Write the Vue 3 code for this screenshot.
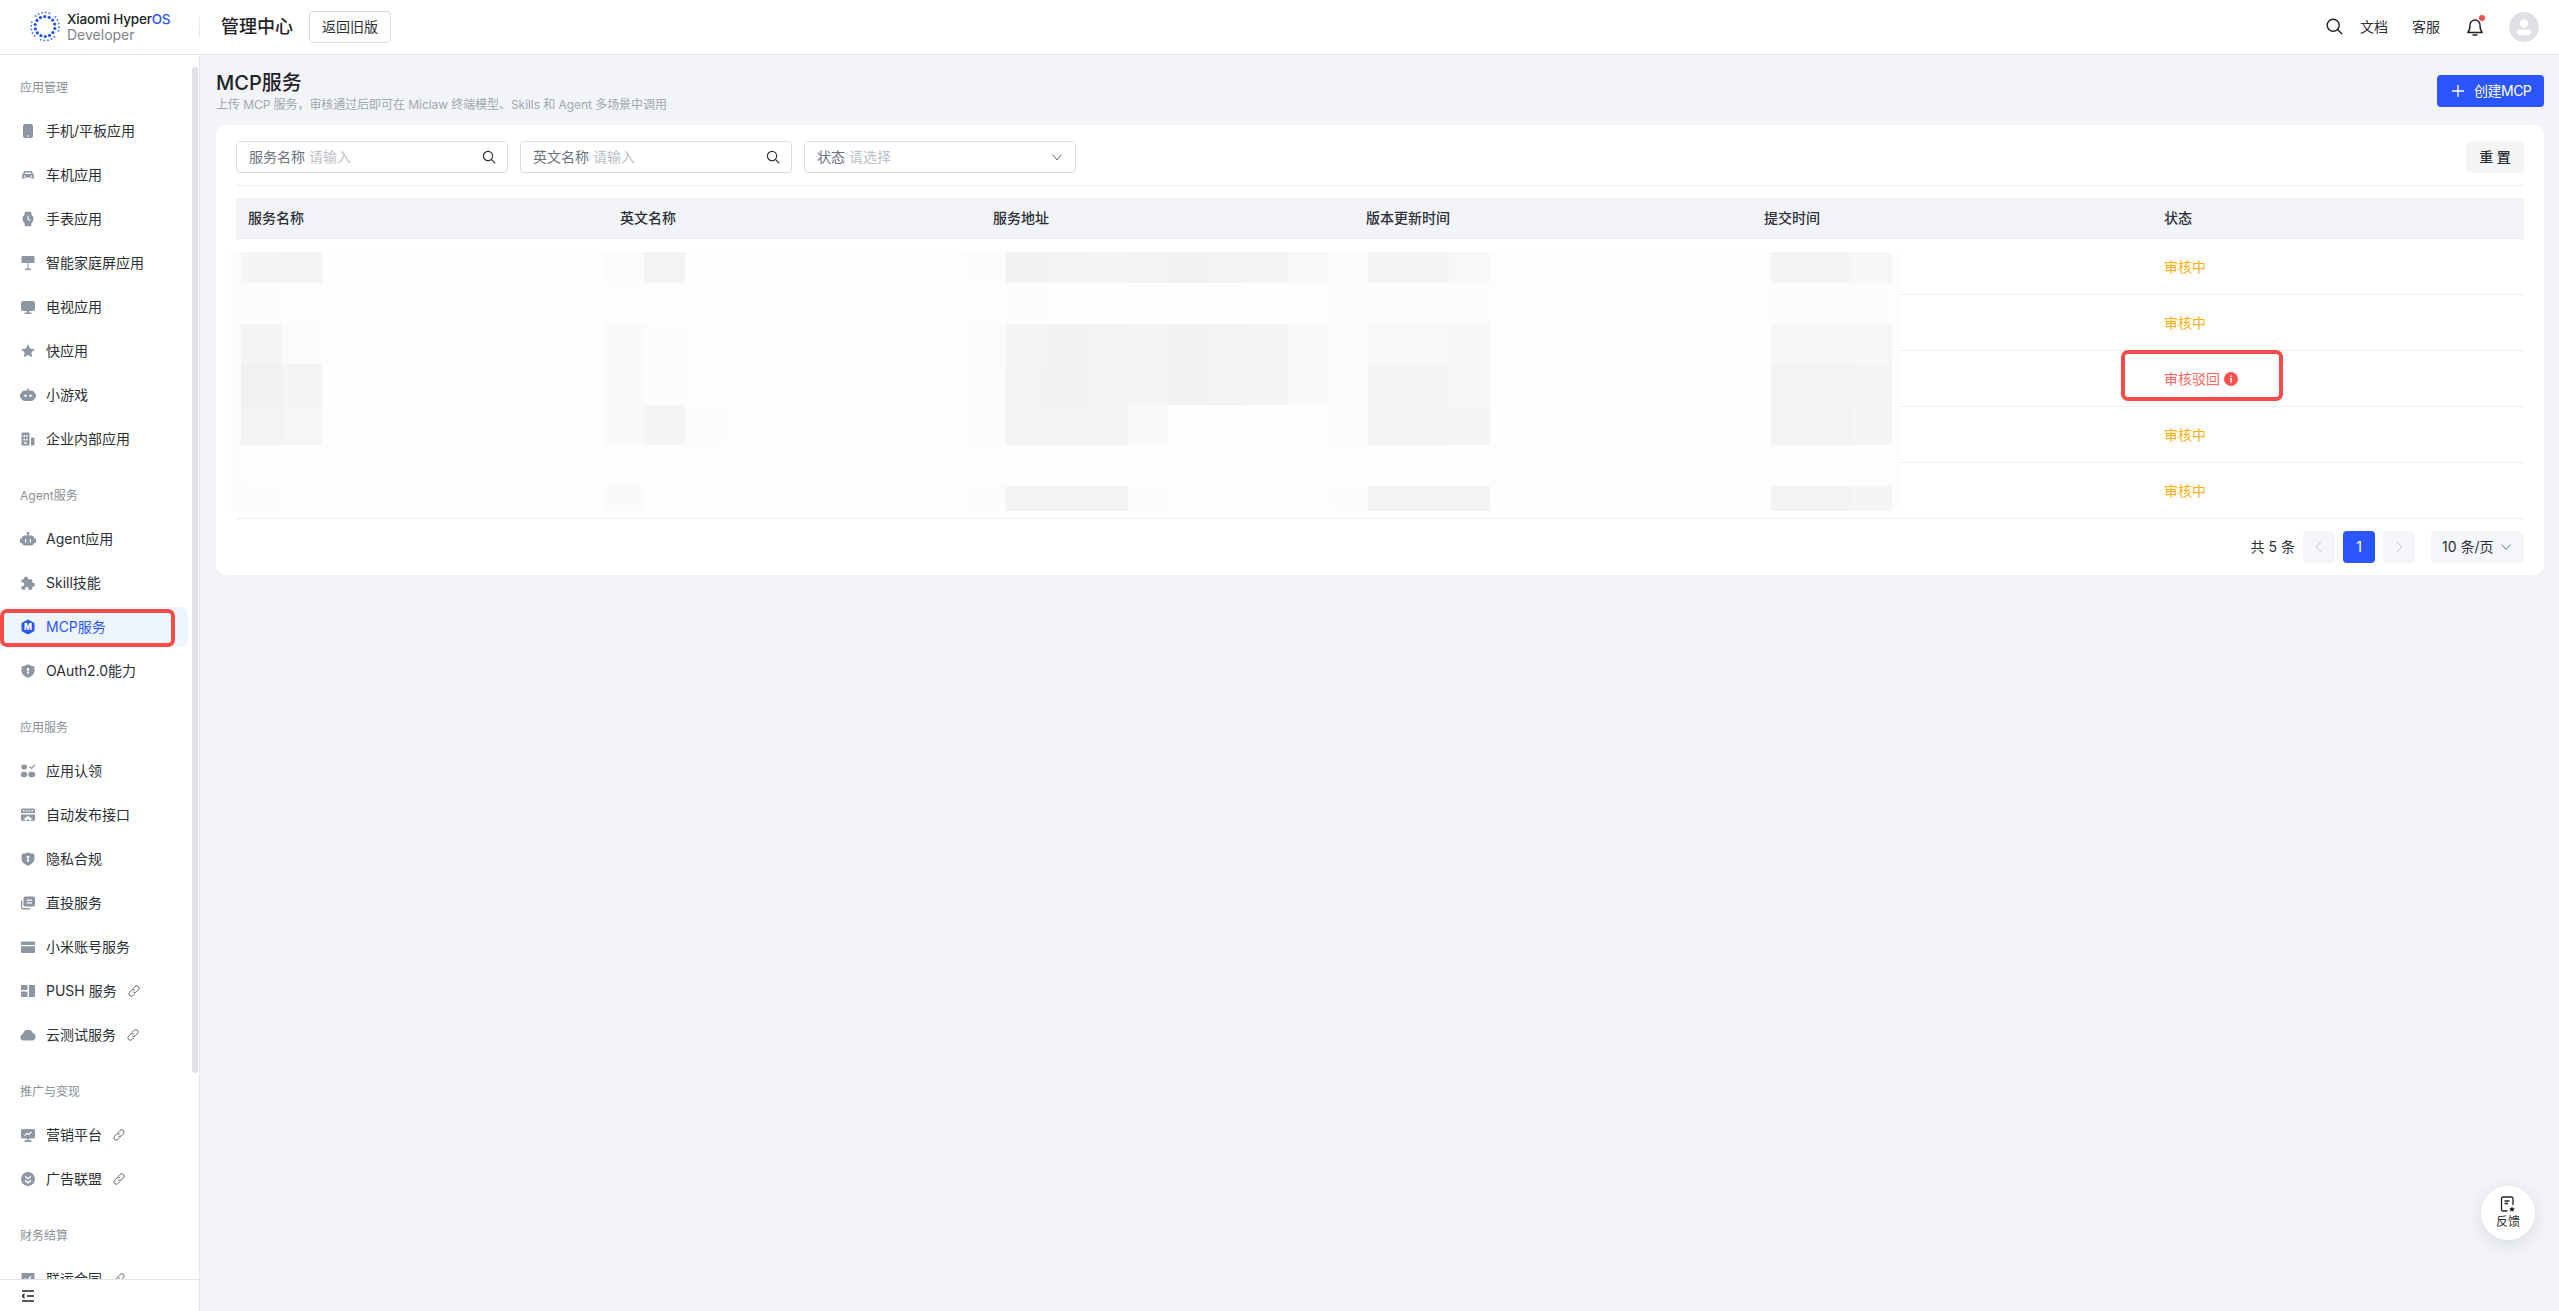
<script setup>
const icons = {
  phone: 'M5 1h6a2 2 0 0 1 2 2v10a2 2 0 0 1-2 2H5a2 2 0 0 1-2-2V3a2 2 0 0 1 2-2zM7 12.600v.8h2v-.8z',
  car: 'M5 4h6c.6 0 1 .3 1.200.8l.8 2.200c.6.3 1 .8 1 1.500v3h-2.500v-1h-7v1H2V8.500c0-.7.4-1.200 1-1.500l.8-2.200C4 4.300 4.400 4 5 4zM5.200 5.500l-.6 1.500h6.800l-.6-1.500zM3.800 8.400v1.300h1.700V8.400zM10.500 8.400v1.300h1.700V8.400z',
  watch: 'M5 .8h6l.5 3A5 5 0 0 1 13.500 8a5 5 0 0 1-2 4.200l-.5 3H5l-.5-3A5 5 0 0 1 2.500 8a5 5 0 0 1 2-4.200zM7.400 4.800v3.700l2.500 1.500.6-1-1.900-1.100V4.800z',
  home: 'M2.500 1h11a1 1 0 0 1 1 1v5a1 1 0 0 1-1 1h-5v5.500H11V15H5v-1.500h2.500V8h-5a1 1 0 0 1-1-1V2a1 1 0 0 1 1-1z',
  tv: 'M3 2h10a2 2 0 0 1 2 2v6a2 2 0 0 1-2 2H9v1.500h2.500V15h-7v-1.500H7V12H3a2 2 0 0 1-2-2V4a2 2 0 0 1 2-2z',
  star: 'M8 1.200l2.100 4.300 4.700.7-3.400 3.300.8 4.700L8 12l-4.200 2.200.8-4.700L1.200 6.200l4.700-.7z',
  game: 'M7.200 1.500h1.600v2H11a4 4 0 0 1 3.800 3H15a1 1 0 0 1 1 1V10a1 1 0 0 1-1 1h-.2A4 4 0 0 1 11 14H5a4 4 0 0 1-3.800-3H1a1 1 0 0 1-1-1V7.500a1 1 0 0 1 1-1h.2A4 4 0 0 1 5 3.500h2.200zM5.500 7.500a1.200 1.200 0 1 0 0 2.400 1.200 1.200 0 0 0 0-2.400zM10.500 7.500a1.200 1.200 0 1 0 0 2.400 1.200 1.200 0 0 0 0-2.400z',
  corp: 'M2.500 1.500h6a1 1 0 0 1 1 1v11a1 1 0 0 1-1 1h-6a1 1 0 0 1-1-1v-11a1 1 0 0 1 1-1zM3.500 4v2h1.500V4zM6 4v2h1.500V4zM3.500 7.500v2h1.500v-2zM6 7.500v2h1.500v-2zM4.500 11v2h2v-2zM11 6.500h2.500a1 1 0 0 1 1 1v6a1 1 0 0 1-1 1H11z',
  agent: 'M8 .8a1.500 1.500 0 0 1 .7 2.800v1h2.300a3.500 3.500 0 0 1 3.400 3H15a1 1 0 0 1 1 1V11a1 1 0 0 1-1 1h-.7A3.500 3.500 0 0 1 11 14.500H5A3.500 3.500 0 0 1 1.700 12H1a1 1 0 0 1-1-1V8.600a1 1 0 0 1 1-1h.6A3.500 3.500 0 0 1 5 4.600h2.300v-1A1.500 1.500 0 0 1 8 .8zM5 8v3.500h1.200V8zM9.800 8v3.500H11V8z',
  skill: 'M6 1.500a2 2 0 0 1 2 2v.7h3.300a1 1 0 0 1 1 1v2.600h.7a2 2 0 0 1 0 4h-.7v2a1 1 0 0 1-1 1H8.500v-1a1.700 1.700 0 0 0-3.400 0v1H2.500a1 1 0 0 1-1-1v-2.600h1a1.800 1.800 0 0 0 0-3.600h-1V5.200a1 1 0 0 1 1-1H4v-.7a2 2 0 0 1 2-2z',
  shield: 'M8 1.300c2 1.100 3.600 1.700 5.500 2 .6 0 1 .5 1 1v3.200c0 3.400-2.700 6-6.500 7.200-3.800-1.200-6.500-3.800-6.500-7.200V4.300c0-.5.4-1 1-1 1.900-.3 3.500-.9 5.500-2zM6.900 5v2.700h2.200V5zM7.100 8.500v2.300h1.800V8.500z',
  claim: 'M3.800 1.500h.8a2.500 2.500 0 0 1 0 5h-.8a2.500 2.500 0 0 1 0-5zM3.500 8.800h1a2.700 2.700 0 0 1 0 5.400h-1a2.700 2.700 0 0 1 0-5.400zM11 8.800h1.500a2.700 2.700 0 0 1 0 5.400H11a2.700 2.700 0 0 1 0-5.400zM9 4l.9-.9 1.500 1.300 3-2.900.9.9-3.900 3.800z',
  publish: 'M2.500 1.500h11A1.500 1.500 0 0 1 15 3v3H1V3a1.500 1.500 0 0 1 1.500-1.500zM3 3.200v1.200h1.600V3.200zM5.800 3.200v1.200h1.600V3.200zM8.600 3.200v1.200h1.600V3.200zM11.400 3.200v1.200H13V3.200zM1 7.500h14v5A1.500 1.500 0 0 1 13.500 14h-2.700v-1.500H13L8 8.800l-5 3.700h2.200V14H2.500A1.500 1.500 0 0 1 1 12.500zM6.500 12.500h3V14h-3z',
  privacy: 'M8 1.200c1.300.7 3 1.300 5.200 1.500.7 0 1.300.6 1.300 1.300v3.500c0 3.600-2.800 6-6.500 7.300-3.700-1.300-6.500-3.700-6.500-7.300V4c0-.7.6-1.300 1.300-1.300C5 2.500 6.700 1.900 8 1.200zM6.800 5v2.600h2.400V5zM7.100 8.300v2.500h1.800V8.300z',
  direct: 'M5 1.500h8.500a1.500 1.500 0 0 1 1.500 1.500v7a1.500 1.500 0 0 1-1.500 1.500H5A1.500 1.500 0 0 1 3.500 10V3A1.500 1.500 0 0 1 5 1.500zM6.500 4.500v1.200h5.500V4.500zM6.500 7.300v1.200h5.500V7.300zM1 5.500h1.300V12a1 1 0 0 0 1 1H10v1.500H3a2 2 0 0 1-2-2z',
  mi: 'M2 2.500h12a1 1 0 0 1 1 1V6H1V3.500a1 1 0 0 1 1-1zM1 7.200h14V13a1 1 0 0 1-1 1H2a1 1 0 0 1-1-1z',
  push: 'M2 2h4.500a1 1 0 0 1 1 1v3a1 1 0 0 1-1 1H1V3a1 1 0 0 1 1-1zM1 8.500h6.500V14H2a1 1 0 0 1-1-1zM9 2h5a1 1 0 0 1 1 1v10a1 1 0 0 1-1 1H9z',
  cloud: 'M8.500 3a4.500 4.500 0 0 1 4.300 3.300A3.700 3.700 0 0 1 12.500 13.500H3.500A3.300 3.300 0 0 1 3 7 4.500 4.500 0 0 1 8.500 3z',
  market: 'M2.500 2h11a1.500 1.500 0 0 1 1.500 1.500v6.500a1.500 1.500 0 0 1-1.500 1.500H8.800v1.700h2.700V15h-7v-1.800h2.700v-1.700H2.500A1.500 1.500 0 0 1 1 10V3.500A1.500 1.500 0 0 1 2.500 2zM4 8.300l.9.8 2.200-2 1.700 1.200 3.200-3-.8-.8-2.500 2.300-1.700-1.200-2.900 2.600z',
  ads: 'M8 1a7 7 0 1 1 0 14A7 7 0 0 1 8 1zM5 4.500v1.800L8 8.500l3-2.200V4.500L8 6.700zM5 8.500v2L8 12.700l3-2.200v-2L8 10.700z',
  contract: 'M2.500 2h11a1 1 0 0 1 1 1v10a1 1 0 0 1-1 1h-11a1 1 0 0 1-1-1V3a1 1 0 0 1 1-1zM4.500 8l3 2.700 4-4.700-1-.9-3.100 3.500-2-1.700z'
}

const sections = [
  { title: '应用管理', items: [
    { t: '手机/平板应用', i: 'phone' }, { t: '车机应用', i: 'car' }, { t: '手表应用', i: 'watch' },
    { t: '智能家庭屏应用', i: 'home' }, { t: '电视应用', i: 'tv' }, { t: '快应用', i: 'star' },
    { t: '小游戏', i: 'game' }, { t: '企业内部应用', i: 'corp' }
  ] },
  { title: 'Agent服务', items: [
    { t: 'Agent应用', i: 'agent' }, { t: 'Skill技能', i: 'skill' },
    { t: 'MCP服务', i: 'mcp', active: true }, { t: 'OAuth2.0能力', i: 'shield' }
  ] },
  { title: '应用服务', items: [
    { t: '应用认领', i: 'claim' }, { t: '自动发布接口', i: 'publish' }, { t: '隐私合规', i: 'privacy' },
    { t: '直投服务', i: 'direct' }, { t: '小米账号服务', i: 'mi' },
    { t: 'PUSH 服务', i: 'push', link: true }, { t: '云测试服务', i: 'cloud', link: true }
  ] },
  { title: '推广与变现', items: [
    { t: '营销平台', i: 'market', link: true }, { t: '广告联盟', i: 'ads', link: true }
  ] },
  { title: '财务结算', items: [{ t: '联运合同', i: 'contract', link: true }] }
]

const columns = ['服务名称', '英文名称', '服务地址', '版本更新时间', '提交时间', '状态']
const statuses = ['审核中', '审核中', '审核驳回', '审核中', '审核中']

// mosaic that hides the row contents: [y0, y1, [x0, x1, colour]...]
const ox = 231
const oy = 252
const g = (xs, cs) => cs.map((c, n) => [xs[n], xs[n + 1], c]).filter((c) => c[2])
const A = [241, 282, 322]
const C = [604, 644, 685, 725]
const S = [966, 1006, 1047, 1088, 1128, 1168, 1208, 1247, 1288, 1329, 1368, 1409, 1449, 1490]
const T = [1771, 1811, 1851, 1892]
const rowsData = [
  [252, 283, ['#f5f5f5', '#f4f4f4'], ['#fbfbfb', '#f3f3f3'],
    ['#fcfcfc', '#f2f2f2', '#f4f4f4', '#f4f6f5', '#f3f3f3', '#f2f2f2', '#f3f3f3', '#f4f4f4', '#f8f8f8', '#fbfbfb', '#f4f6f5', '#f5f5f5', '#f8f8f8'],
    ['#f4f4f4', '#f4f4f4', '#f7f7f7']],
  [283, 324, ['#fcfcfc', '#fdfdfd'], [],
    ['', '#fcfcfc', '#fefefe', '#fefefe', '#fefefe', '#fefefe', '#fefefe', '#fefefe', '#fefefe', '#fcfcfc', '#fcfcfc', '#fcfcfc', '#fcfcfc'],
    ['#fcfcfc', '#fcfcfc', '#fcfcfc']],
  [324, 364, ['#f4f4f4', '#fbfbfb'], ['#f9f9f9', '#fbfcfb'],
    ['#fbfbfb', '#f4f6f5', '#f2f2f2', '#f3f3f3', '#f4f6f5', '#f2f2f2', '#f3f3f3', '#f4f4f4', '#f8f8f8', '#fbfbfb', '#f8f8f8', '#f8f8f8', '#f7f7f7'],
    ['#f7f7f7', '#f7f7f7', '#f7f7f7']],
  [364, 405, ['#f1f1f1', '#f4f4f4'], ['#f9f9f9', '#fcfcfc'],
    ['#fcfcfc', '#f3f3f3', '#f2f2f2', '#f4f6f5', '#f4f6f5', '#f2f2f2', '#f3f3f3', '#f4f4f4', '#f8f8f8', '#fbfbfb', '#f4f6f5', '#f4f6f5', '#f5f7f6'],
    ['#f3f3f3', '#f3f3f3', '#f4f4f4']],
  [405, 445, ['#f3f3f3', '#f6f6f6'], ['#f9f9f9', '#f5f5f5', '#fcfcfc'],
    ['#fbfbfb', '#f3f3f3', '#f3f3f3', '#f3f3f3', '#f9f9f9', '#fefefe', '#fefefe', '#fefefe', '#fefefe', '#fbfbfb', '#f4f4f4', '#f4f4f4', '#f4f6f5'],
    ['#f3f3f3', '#f3f3f3', '#f4f6f5']],
  [486, 511, ['#fbfbfb'], ['#fafafa'],
    ['#fcfcfc', '#f3f3f3', '#f3f3f3', '#f3f3f3', '#fbfbfb', '', '', '', '', '#fbfcfb', '#f3f3f3', '#f3f3f3', '#f3f3f3'],
    ['#f3f3f3', '#f3f3f3', '#f4f6f5']]
]
const mosaic = []
for (const [y0, y1, a, c, s, t] of rowsData) {
  for (const [x0, x1, col] of [...g(A, a), ...g(C, c), ...g(S, s), ...g(T, t)]) {
    mosaic.push({ left: x0 - ox + 'px', top: y0 - oy + 'px', width: x1 - x0 + 'px', height: y1 - y0 + 'px', background: col })
  }
}

// logo: bright inner ring of large dots, paler outer ring of small dots
const logoDots = []
for (let n = 0; n < 14; n++) {
  const a = (n / 14) * Math.PI * 2 + 0.2
  logoDots.push({ x: 16 + Math.cos(a) * 10, y: 15.500 + Math.sin(a) * 10, r: 1.600, o: 1 })
}
for (let n = 0; n < 24; n++) {
  const a = (n / 24) * Math.PI * 2 + 0.05
  if (n % 6 === 2) continue
  logoDots.push({ x: 16 + Math.cos(a) * 14, y: 15.500 + Math.sin(a) * 14, r: 1, o: .75 })
}
</script>

<template>
  <div class="page">
    <header class="topbar">
      <div class="logo">
        <svg class="logo-mark" width="32" height="31" viewBox="0 0 32 31">
          <circle v-for="(d, n) in logoDots" :key="n" :cx="d.x" :cy="d.y" :r="d.r" :opacity="d.o" fill="#2456f5" />
        </svg>
        <div class="logo-text">
          <div class="logo-line1">Xiaomi Hyper<span class="logo-os">OS</span></div>
          <div class="logo-line2">Developer</div>
        </div>
      </div>
      <span class="top-divider"></span>
      <span class="top-title">管理中心</span>
      <button class="old-btn">返回旧版</button>
      <div class="top-right">
        <svg class="top-search" width="17" height="17" viewBox="0 0 17 17" fill="none" stroke="#1f2329" stroke-width="1.400">
          <circle cx="7.200" cy="7.200" r="6" /><path d="M11.600 11.600l4.200 4.200" stroke-linecap="round" />
        </svg>
        <span class="top-link">文档</span>
        <span class="top-link">客服</span>
        <span class="bell">
          <svg width="18" height="20" viewBox="0 0 18 20" fill="none" stroke="#1f2329" stroke-width="1.400" stroke-linejoin="round">
            <path d="M4 8a5 5 0 0 1 10 0c0 4 .8 6 2.200 7.500H1.800C3.200 14 4 12 4 8z" />
            <path d="M7 18h4" stroke-linecap="round" />
          </svg>
          <i class="bell-dot"></i>
        </span>
        <span class="avatar">
          <svg width="30" height="30" viewBox="0 0 30 30" fill="#fff">
            <circle cx="15" cy="11.500" r="4.200" /><rect x="8" y="17.500" width="14" height="5.500" rx="2.750" />
          </svg>
        </span>
      </div>
    </header>

    <div class="body">
      <aside class="sidebar">
        <nav class="menu">
          <section v-for="s in sections" :key="s.title" class="menu-sec">
            <div class="menu-title">{{ s.title }}</div>
            <a v-for="it in s.items" :key="it.t" class="menu-item" :class="{ active: it.active }">
              <svg v-if="it.i === 'mcp'" class="menu-icon" width="16" height="16" viewBox="0 0 16 16">
                <path d="M8 1l6 3.200v7.600L8 15l-6-3.200V4.200z" fill="#2a55ff" stroke="#2a55ff" stroke-linejoin="round" />
                <text x="8" y="11" text-anchor="middle" font-size="8.500" font-weight="800" fill="#fff" font-family="Inter, sans-serif">M</text>
              </svg>
              <svg v-else class="menu-icon" width="16" height="16" viewBox="0 0 16 16">
                <path :d="icons[it.i]" fill="#8f96a3" fill-rule="evenodd" />
              </svg>
              <span>{{ it.t }}</span>
              <svg v-if="it.link" class="link-icon" width="14" height="14" viewBox="0 0 14 14" fill="none" stroke="#5f6570" stroke-width="1">
                <path d="M6 4.500l2-2a2.300 2.300 0 0 1 3.400 3.300l-2 2a2.300 2.300 0 0 1-3.300 0" />
                <path d="M8 9.500l-2 2a2.300 2.300 0 0 1-3.400-3.300l2-2a2.300 2.300 0 0 1 3.300 0" />
              </svg>
            </a>
          </section>
        </nav>
        <div class="side-foot">
          <svg width="14" height="14" viewBox="0 0 14 14" fill="none" stroke="#1f2329" stroke-width="1.500">
            <path d="M1 2h12M6 7h7M1 12h12" /><path d="M3.500 5L1.500 7l2 2" />
          </svg>
        </div>
        <i class="scroll-thumb"></i>
      </aside>

      <main class="main">
        <div class="head">
          <div>
            <h1 class="h-title">MCP服务</h1>
            <p class="h-sub">上传 MCP 服务，审核通过后即可在 Miclaw 终端模型、Skills 和 Agent 多场景中调用</p>
          </div>
          <button class="create-btn">
            <svg width="14" height="14" viewBox="0 0 14 14" stroke="#fff" stroke-width="1.300"><path d="M7 1v12M1 7h12" /></svg>
            <span>创建MCP</span>
          </button>
        </div>

        <div class="card">
          <div class="filters">
            <div class="field">
              <span class="f-label">服务名称</span><span class="f-ph">请输入</span>
              <svg class="f-icon" width="14" height="14" viewBox="0 0 14 14" fill="none" stroke="#2b2f36" stroke-width="1.200">
                <circle cx="6" cy="6" r="4.600" /><path d="M9.400 9.400l3.400 3.400" stroke-linecap="round" />
              </svg>
            </div>
            <div class="field">
              <span class="f-label">英文名称</span><span class="f-ph">请输入</span>
              <svg class="f-icon" width="14" height="14" viewBox="0 0 14 14" fill="none" stroke="#2b2f36" stroke-width="1.200">
                <circle cx="6" cy="6" r="4.600" /><path d="M9.400 9.400l3.400 3.400" stroke-linecap="round" />
              </svg>
            </div>
            <div class="field">
              <span class="f-label">状态</span><span class="f-ph">请选择</span>
              <svg class="f-icon" width="14" height="14" viewBox="0 0 14 14" fill="none" stroke="#6b7280" stroke-width="1">
                <path d="M2.500 4.500L7 10l4.500-5.500" />
              </svg>
            </div>
            <button class="reset-btn">重 置</button>
          </div>

          <div class="table">
            <div class="t-row t-head">
              <div v-for="c in columns" :key="c" class="t-cell">{{ c }}</div>
            </div>
            <div v-for="(st, n) in statuses" :key="n" class="t-row t-body">
              <div class="t-cell t-status" :class="st === '审核驳回' ? 'rejected' : 'pending'">
                {{ st }}
                <svg v-if="st === '审核驳回'" class="info" width="14" height="14" viewBox="0 0 14 14">
                  <circle cx="7" cy="7" r="7" fill="#f9504d" />
                  <rect x="6.200" y="6" width="1.600" height="4.600" fill="#fff" /><rect x="6.200" y="3.400" width="1.600" height="1.600" fill="#fff" />
                </svg>
              </div>
            </div>
          </div>

          <div class="pager">
            <span class="total">共 5 条</span>
            <button class="p-btn">
              <svg width="12" height="12" viewBox="0 0 12 12" fill="none" stroke="#c3c7cf" stroke-width="1"><path d="M8 1L3 6l5 5" /></svg>
            </button>
            <button class="p-btn on">1</button>
            <button class="p-btn">
              <svg width="12" height="12" viewBox="0 0 12 12" fill="none" stroke="#c3c7cf" stroke-width="1"><path d="M4 1l5 5-5 5" /></svg>
            </button>
            <div class="p-size">
              <span>10 条/页</span>
              <svg width="12" height="12" viewBox="0 0 12 12" fill="none" stroke="#6b7280" stroke-width="1"><path d="M1.500 3.500L6 8.500l4.500-5" /></svg>
            </div>
          </div>
        </div>
      </main>
    </div>

    <!-- censored table contents -->
    <div class="mosaic">
      <i class="mosaic-edge"></i>
      <i v-for="(m, n) in mosaic" :key="n" class="mosaic-cell" :style="m"></i>
    </div>

    <!-- annotations drawn on top of the screenshot -->
    <i class="mark mark-menu"></i>
    <i class="mark mark-status"></i>

    <button class="feedback">
      <svg width="16" height="17" viewBox="0 0 16 17" fill="none" stroke="#1f2329" stroke-width="1.300">
        <path d="M7.500 15H3a1.500 1.500 0 0 1-1.500-1.500v-11A1.500 1.500 0 0 1 3 1h8.500A1.500 1.500 0 0 1 13 2.500V9" />
        <path d="M4.500 5h5M4.500 7.500h3.500" />
        <path d="M12 10.500l1 1.800 1.800.3-1.300 1.300.3 1.800-1.800-.9-1.800.9.300-1.800-1.300-1.300 1.800-.3z" fill="#1f2329" stroke="none" />
      </svg>
      <span>反馈</span>
    </button>
  </div>
</template>

<style>
html, body { margin: 0; height: 100%; overflow: hidden; }
</style>

<style scoped>
* { box-sizing: border-box; }
.page {
  position: relative;
  display: flex;
  flex-direction: column;
  height: 1311px;
  overflow: hidden;
  background: #f2f4f8;
  color: #23272e;
  font-family: Inter, "Noto Sans CJK SC", "Noto Sans", sans-serif;
  font-size: 14px;
  line-height: 20px;
}
button { font-family: inherit; line-height: 20px; border: 0; padding: 0; cursor: pointer; }
.topbar {
  flex: none;
  display: flex;
  align-items: center;
  height: 55px;
  padding: 0 20px 1px 29px;
  background: #fff;
  border-bottom: 1px solid #e3e5ea;
}
.logo { display: flex; align-items: center; width: 170px; }
.logo-mark { flex: none; margin-right: 6px; }
.logo-text { line-height: 16px; }
.logo-line1 { font-size: 13.500px; font-weight: 500; color: #1d1f24; white-space: nowrap; letter-spacing: -.2px; }
.logo-os { color: #2a55ff; }
.logo-line2 { font-size: 14px; color: #808388; }
.top-divider { width: 1px; height: 20px; background: #e6e8ec; }
.top-title { margin-left: 21px; font-size: 18px; line-height: 26px; font-weight: 500; color: #1f2329; }
.old-btn {
  margin-left: 16px;
  width: 82px;
  height: 32px;
  background: #fff;
  border: 1px solid #d9dce1;
  border-radius: 4px;
  font-size: 14px;
  color: #2b2f36;
}
.top-right { margin-left: auto; display: flex; align-items: center; }
.top-search { margin-right: 17px; }
.top-link { font-size: 14px; color: #2b2f36; margin-right: 24px; }
.top-link:nth-of-type(2) { margin-right: 26px; }
.bell { position: relative; display: flex; margin-right: 25px; }
.bell-dot { position: absolute; top: -2px; right: -1px; width: 6px; height: 6px; border-radius: 50%; background: #f9504d; }
.avatar { display: flex; width: 30px; height: 30px; border-radius: 50%; background: #dfe1e6; }

.body { flex: 1; display: flex; min-height: 0; }
.sidebar {
  position: relative;
  flex: none;
  display: flex;
  flex-direction: column;
  width: 200px;
  background: #fff;
  border-right: 1px solid #e3e5ea;
}
.menu { flex: 1; min-height: 0; overflow: hidden; padding: 23px 11px 0 2px; }
.menu-sec + .menu-sec { margin-top: 27px; }
.menu-title { height: 20px; line-height: 20px; padding-left: 18px; margin-bottom: 13px; font-size: 12px; color: #8b8f97; }
.menu-item {
  display: flex;
  align-items: center;
  height: 40px;
  padding-left: 18px;
  margin-bottom: 4px;
  border-radius: 8px;
  font-size: 14px;
  color: #2b2f36;
  white-space: nowrap;
}
.menu-item:last-child { margin-bottom: 0; }
.menu-item.active { background: #eff5ff; color: #2a55ff; }
.menu-icon { flex: none; margin-right: 10px; }
.link-icon { margin-left: 10px; }
.side-foot {
  flex: none;
  display: flex;
  align-items: center;
  height: 32px;
  padding-left: 21px;
  background: #fff;
  border-top: 1px solid #e3e5ea;
}
.scroll-thumb {
  position: absolute;
  top: 12px;
  right: 1px;
  width: 6px;
  height: 1006px;
  border-radius: 3px;
  background: #dfe1e6;
}

.main { flex: 1; min-width: 0; padding: 14px 15px 0 16px; }
.head { display: flex; align-items: center; justify-content: space-between; }
.h-title { margin: 0; font-size: 20px; line-height: 28px; font-weight: 500; color: #1f2329; }
.h-sub { margin: 0; font-size: 12px; line-height: 16px; letter-spacing: -.06px; color: #a3a7af; }
.create-btn {
  display: flex;
  align-items: center;
  gap: 9px;
  width: 107px;
  height: 32px;
  padding-left: 14px;
  background: #2a55ff;
  border-radius: 4px;
  color: #fff;
  font-size: 14px;
  letter-spacing: -.5px;
}
.card {
  margin-top: 12px;
  padding: 16px 20px 12px;
  background: #fff;
  border-radius: 10px;
}
.filters {
  display: flex;
  gap: 12px;
  padding-bottom: 12px;
  border-bottom: 1px solid #eceef1;
}
.field {
  position: relative;
  display: flex;
  align-items: center;
  width: 272px;
  height: 32px;
  padding: 0 12px;
  background: #fff;
  border: 1px solid #d9dce1;
  border-radius: 4px;
}
.f-label { color: #6b7280; margin-right: 4px; }
.f-ph { color: #bcc0c8; }
.f-icon { margin-left: auto; margin-right: -1px; }
.reset-btn {
  margin-left: auto;
  width: 58px;
  height: 32px;
  background: #f5f5f6;
  border-radius: 4px;
  font-size: 14px;
  font-weight: 500;
  color: #2b2f36;
}
.table { margin-top: 12px; }
.t-row {
  display: grid;
  grid-template-columns: 372px 373px 373px 398px 400px 1fr;
  border-bottom: 1px solid #eceef1;
}
.t-cell { padding-left: 12px; display: flex; align-items: center; }
.t-head { height: 41px; background: #f2f4f8; font-weight: 500; color: #2b2f36; }
.t-body { height: 56px; }
.t-status { grid-column: 6; }
.pending { color: #ffae0d; }
.rejected { color: #fb6464; }
.info { margin-left: 4px; }
.pager { display: flex; align-items: center; justify-content: flex-end; margin-top: 12px; }
.total { margin-right: 8px; color: #2b2f36; }
.p-btn {
  display: flex;
  align-items: center;
  justify-content: center;
  width: 32px;
  height: 32px;
  margin-right: 8px;
  background: #f5f6fa;
  border-radius: 4px;
  font-size: 14px;
  color: #2b2f36;
}
.p-btn.on { background: #2a55ff; color: #fff; }
.p-size {
  display: flex;
  align-items: center;
  justify-content: space-between;
  width: 93px;
  height: 32px;
  margin-left: 8px;
  padding: 0 12px 0 11px;
  background: #f5f6fa;
  border-radius: 4px;
  white-space: nowrap;
  color: #2b2f36;
}

.mosaic {
  position: absolute;
  left: 231px;
  top: 252px;
  width: 1668px;
  height: 259px;
  background: #fdfdfd;
}
.mosaic-edge { position: absolute; left: 0; top: 0; width: 10px; height: 100%; background: #fafbfd; }
.mosaic-cell { position: absolute; display: block; }

.mark { position: absolute; border: 4px solid #f54c49; border-radius: 7px; }
.mark-menu { left: 0; top: 609px; width: 175px; height: 38px; }
.mark-status { left: 2121px; top: 350px; width: 162px; height: 51px; }

.feedback {
  position: absolute;
  left: 2481px;
  top: 1186px;
  display: flex;
  flex-direction: column;
  align-items: center;
  justify-content: center;
  gap: 1px;
  width: 54px;
  height: 54px;
  border-radius: 50%;
  background: #fff;
  box-shadow: 0 4px 16px rgba(30, 40, 70, .12);
  font-size: 12px;
  line-height: 16px;
  color: #2b2f36;
}
</style>
